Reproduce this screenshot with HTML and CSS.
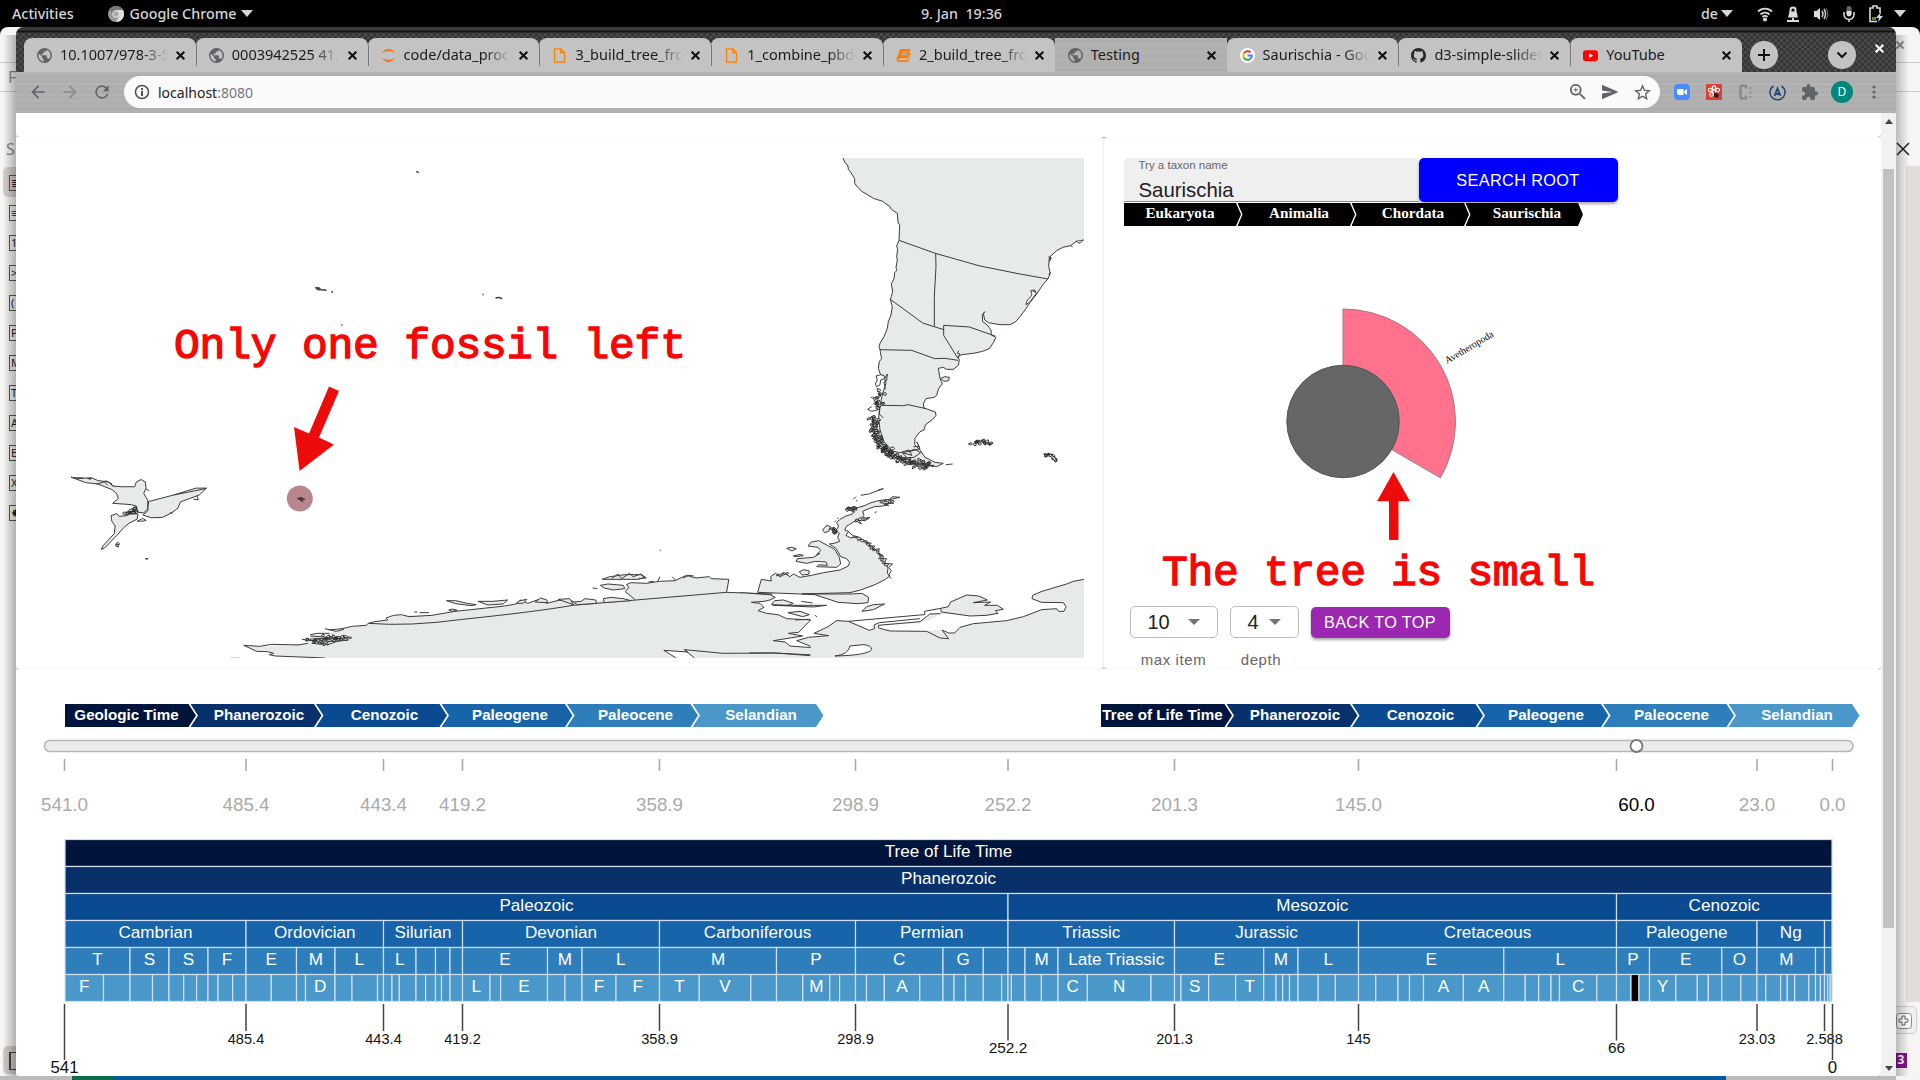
FILE: index.html
```html
<!DOCTYPE html>
<html lang="en">
<head>
<meta charset="utf-8">
<title>Testing</title>
<link rel="stylesheet" href="styles.css">
</head>
<body>
<svg class="defs" width="0" height="0">
  <symbol id="globe" viewBox="2 2 20 20"><path d="M12 2a10 10 0 1 0 0 20 10 10 0 0 0 0-20zM4 12c0-1 .2-1.700.5-2.500L9 14v1c0 1.100.9 2 2 2v3c-4-.5-7-3.900-7-8zm14 5c-.3-.8-1-1.400-1.900-1.400h-1v-3c0-.6-.4-1-1-1H8V9.500h2c.6 0 1-.4 1-1v-2h2c1.100 0 2-.9 2-2v-.1c3 1.200 5 4.100 5 7.600 0 1.900-.8 3.700-2 5z"/></symbol>
  <symbol id="x" viewBox="0 0 10 10"><path d="M1.500 1.500l7 7M8.500 1.500l-7 7" fill="none" stroke="currentColor" stroke-width="1.900"/></symbol>
  <symbol id="file" viewBox="0 0 14 18"><path d="M1 1h7.500L13 5.500V17H1zM8.500 1v4.500H13" fill="none" stroke="#ff8000" stroke-width="1.500"/></symbol>
</svg>

<div class="topbar">
  <div class="top-left"><span class="activities">Activities</span>
    <svg width="16" height="16" viewBox="0 0 16 16"><circle cx="8" cy="8" r="8" fill="#999"/><path d="M8 4h7a8 8 0 0 1-7 12l3.500-6z" fill="#ddd"/><path d="M8 4h7A8 8 0 0 0 2 3l2.500 6z" fill="#777"/><circle cx="8" cy="8" r="3.300" fill="#aaa" stroke="#e8e8e8"/></svg>
    <span>Google Chrome</span><i class="tri"></i></div>
  <div class="clock">9. Jan&nbsp; 19:36</div>
  <div class="status"><span>de</span><i class="tri lang-tri"></i>
    <svg width="16" height="16" viewBox="0 0 16 16" fill="none" stroke="#d6d6d6" stroke-width="1.800"><path d="M1 5.500a10 10 0 0 1 14 0M3.500 8.500a6.500 6.500 0 0 1 9 0M5.500 11a3.500 3.500 0 0 1 5 0"/><circle cx="8" cy="13.500" r="1.200" fill="#ddd"/></svg>
    <svg width="14" height="16" viewBox="0 0 14 16"><path d="M4.500 6V4a2.500 2.500 0 0 1 5 0v2" fill="none" stroke="#ddd" stroke-width="2"/><path d="M3.500 5.500h7L12 11.500H2zM6 12h2v2h5v2H1v-2h5z" fill="#ddd"/></svg>
    <svg width="16" height="16" viewBox="0 0 16 16"><path d="M1 5h2.500L7 2v12L3.500 11H1z" fill="#ddd"/><path d="M9 5q2 3 0 6M11 3q3 5 0 10" fill="none" stroke="#ccc" stroke-width="1.500"/><path d="M13 2q3.500 6 0 12" fill="none" stroke="#555" stroke-width="1.400"/></svg>
    <svg width="14" height="16" viewBox="0 0 14 16"><rect x="4.500" y="0" width="5" height="10" rx="2.500" fill="#666"/><path d="M4.500 5h5v3a2.500 2.500 0 0 1-5 0z" fill="#ddd"/><path d="M2 6v2.500a5 5 0 0 0 10 0V6M7 13v3" fill="none" stroke="#ddd" stroke-width="1.500"/></svg>
    <svg width="14" height="18" viewBox="0 0 14 18"><path d="M8 16.500H1V3h3V1h4v2h3v5" fill="none" stroke="#ddd" stroke-width="1.600"/><path d="M3 12h4v3H3z" fill="#4e9a06"/><path d="M12 7L7 13h3l-1 4 5-6h-3z" fill="#ddd"/></svg>
    <i class="tri"></i></div>
</div>

<div class="desktop">
  <div class="editor">
    <div class="ed-title"></div>
    <div class="ed-menu"><span>F</span></div>
    <div class="ed-side"><span>S</span>
      <ul class="style-list">
        <li class="on"><b>≣</b></li><li><b>≡</b></li><li><b>1</b></li><li><b>&gt;</b></li><li><b>(</b></li><li><b>P</b></li><li><b>M</b></li><li><b>T</b></li><li><b>A</b></li><li><b>B</b></li><li><b>X</b></li><li><b>✸</b></li>
      </ul>
    </div>
    <div class="ed-right"></div>
    <div class="ed-foot-left"></div>
    <svg class="ed-x1" width="10" height="10" color="#8b8b8a"><use href="#x"/></svg>
    <svg class="ed-x2" width="14" height="14" viewBox="0 0 14 14"><path d="M1 1l12 12M13 1L1 13" stroke="#222" stroke-width="1.500"/></svg>
    <div class="ed-tool"><svg width="16" height="16" viewBox="0 0 16 16"><rect x=".5" y=".5" width="15" height="15" rx="3" fill="#fff" stroke="#888"/><path d="M6 3h3v3h3v3H9v3H6V9H3V6h3z" fill="none" stroke="#666"/></svg></div>
    <div class="ed-badge">3</div>
  </div>
  <div class="strip"></div>

  <div class="chrome">
    <div class="tabstrip">
      <div class="tab"><svg class="fav" fill="#5f6368"><use href="#globe"/></svg><span class="fade">10.1007/978-3-540</span><svg class="cl"><use href="#x"/></svg></div>
      <div class="tab"><svg class="fav" fill="#5f6368"><use href="#globe"/></svg><span class="fade">0003942525 41..4</span><svg class="cl"><use href="#x"/></svg></div>
      <div class="tab"><svg class="fav" viewBox="0 0 16 18"><path d="M0 6Q8-4 16 6 8 2 0 6zM0 12q8 10 16 0-8 4-16 0z" fill="#f37726"/></svg><span class="fade">code/data_process</span><svg class="cl"><use href="#x"/></svg></div>
      <div class="tab"><svg class="fav"><use href="#file"/></svg><span class="fade">3_build_tree_from</span><svg class="cl"><use href="#x"/></svg></div>
      <div class="tab"><svg class="fav"><use href="#file"/></svg><span class="fade">1_combine_pbdb</span><svg class="cl"><use href="#x"/></svg></div>
      <div class="tab"><svg class="fav" viewBox="0 0 16 16"><path d="M4.500 1h11L12.500 11H3q-1.500 1 0 2h9.500l2.500-8 .8.500L13 15H2.500Q0 14 .8 11z" fill="#ff7b00"/><path d="M6.500 4.500h6M5.700 7h6" stroke="#c3c3c3"/></svg><span class="fade">2_build_tree_from</span><svg class="cl"><use href="#x"/></svg></div>
      <div class="tab active"><svg class="fav" fill="#5f6368"><use href="#globe"/></svg><span>Testing</span><svg class="cl"><use href="#x"/></svg></div>
      <div class="tab"><svg class="fav" viewBox="0 0 16 16" fill="none" stroke-width="2.200"><circle cx="8" cy="8" r="8" fill="#fff"/><path d="M11.300 4.700A4.600 4.600 0 0 0 4 5.800" stroke="#ea4335"/><path d="M4 5.800a4.600 4.600 0 0 0 0 4.400" stroke="#fbbc05"/><path d="M4 10.200a4.600 4.600 0 0 0 7.200 1.200" stroke="#34a853"/><path d="M11.200 11.400A4.600 4.600 0 0 0 12.600 8H8" stroke="#4285f4"/></svg><span class="fade">Saurischia - Google</span><svg class="cl"><use href="#x"/></svg></div>
      <div class="tab"><svg class="fav" viewBox="0 0 16 16" fill="#24292e"><path d="M8 0C3.580 0 0 3.580 0 8c0 3.540 2.290 6.530 5.470 7.590.4.070.55-.17.55-.38 0-.19-.010-.82-.010-1.490-2.010.37-2.530-.49-2.690-.94-.090-.23-.48-.94-.82-1.130-.28-.15-.68-.52-.010-.53.63-.010 1.080.58 1.230.82.72 1.210 1.870.87 2.330.66.070-.52.28-.87.51-1.070-1.780-.2-3.640-.89-3.640-3.950 0-.87.31-1.590.82-2.150-.080-.2-.36-1.020.080-2.120 0 0 .67-.21 2.200.82.64-.18 1.320-.27 2-.27s1.360.090 2 .27c1.530-1.040 2.200-.82 2.200-.82.44 1.100.16 1.920.080 2.120.51.56.82 1.270.82 2.150 0 3.070-1.870 3.750-3.650 3.950.29.25.54.73.54 1.480 0 1.070-.010 1.930-.010 2.200 0 .21.15.46.55.38A8 8 0 0 0 16 8c0-4.420-3.580-8-8-8z"/></svg><span class="fade">d3-simple-slider</span><svg class="cl"><use href="#x"/></svg></div>
      <div class="tab"><svg class="fav" viewBox="0 0 16 16"><rect y="2.500" width="16" height="11.500" rx="3" fill="#f00"/><path d="M6.500 5.700v5l4.300-2.500z" fill="#fff"/></svg><span>YouTube</span><svg class="cl"><use href="#x"/></svg></div>
      <div class="round"><svg width="14" height="14" viewBox="0 0 14 14"><path d="M7 1v12M1 7h12" stroke="#111" stroke-width="2"/></svg></div>
      <div class="round second"><svg width="12" height="12" viewBox="0 0 12 12"><path d="M1.500 3.500L6 8l4.500-4.500" fill="none" stroke="#111" stroke-width="2"/></svg></div>
      <svg class="win-close" width="11" height="11" color="#fff"><use href="#x"/></svg>
    </div>
    <div class="toolbar">
      <svg class="nav" viewBox="0 0 24 24" fill="#5f6368"><path d="M20 11H7.830l5.590-5.590L12 4l-8 8 8 8 1.410-1.410L7.830 13H20z"/></svg>
      <svg class="nav" viewBox="0 0 24 24" fill="#8b8c8d"><path d="M12 4l-1.410 1.410L16.170 11H4v2h12.170l-5.580 5.590L12 20l8-8z"/></svg>
      <svg class="nav" viewBox="0 0 24 24" fill="#5f6368"><path d="M17.650 6.350A8 8 0 1 0 19.730 14h-2.080A6 6 0 1 1 12 6c1.660 0 3.140.69 4.220 1.780L13 11h7V4z"/></svg>
      <div class="omnibox">
        <svg width="16" height="16" viewBox="0 0 16 16"><circle cx="8" cy="8" r="6.500" fill="none" stroke="#4c5055" stroke-width="1.500"/><path d="M7 7h2v5H7zM7 4h2v2H7z" fill="#4c5055"/></svg>
        <span class="url">localhost<em>:8080</em></span>
        <svg width="16" height="16" viewBox="3 3 18 18" fill="#5f6368"><path d="M15.500 14h-.79l-.28-.27A6.500 6.500 0 1 0 13.730 14.430l.27.28v.79l5 5 1.490-1.490zm-6 0a4.500 4.500 0 1 1 0-9 4.500 4.500 0 0 1 0 9zM10 7H9v2H7v1h2v2h1v-2h2V9h-2z"/></svg>
        <svg width="16" height="16" viewBox="2 2 20 20" fill="#5f6368"><path d="M2 21l21-9L2 3v7l13 2-13 2z"/></svg>
        <svg width="17" height="17" viewBox="2 2 20 20" fill="#5f6368"><path d="M22 9.240l-7.190-.62L12 2 9.190 8.630 2 9.240l5.460 4.730L5.820 21 12 17.270 18.180 21l-1.630-7.030zM12 15.400l-3.760 2.270 1-4.280-3.320-2.880 4.380-.38L12 6.100l1.710 4.040 4.380.38-3.320 2.880 1 4.280z"/></svg>
      </div>
      <div class="exts">
        <svg width="16" height="16" viewBox="0 0 16 16"><rect width="16" height="16" rx="4" fill="#4a8cff"/><path d="M3 5h6.500v6H4.500L3 9.500zM10.300 7L13 5v6l-2.700-2z" fill="#fff"/></svg>
        <svg width="16" height="16" viewBox="0 0 16 16"><rect width="16" height="16" fill="#dc4136"/><g fill="none" stroke="#fff" stroke-width="1.100"><circle cx="8" cy="7.500" r="1.600"/><circle cx="8" cy="3.700" r="1.800"/><circle cx="4.300" cy="6" r="1.800"/><circle cx="11.700" cy="6" r="1.800"/><circle cx="5.500" cy="10.500" r="1.800"/></g><path d="M8 8l5 2.500-1 3.500-4-1z" fill="#222"/></svg>
        <svg width="16" height="16" viewBox="0 0 16 16"><path d="M8 4.500V3Q8 1.500 6 1.500H4.500Q2.500 1.500 2.500 3.500v9Q2.500 14.500 4.500 14.500H6Q8 14.500 8 13V11.500" fill="none" stroke="#8a8a8a" stroke-width="2.500"/><path d="M12.500 3v11" stroke="#999" stroke-width="2.500" stroke-dasharray="2.500 2"/></svg>
        <svg width="17" height="17" viewBox="0 0 17 17"><path d="M4.500 2a7.500 7.500 0 1 0 8 0" fill="none" stroke="#2c456f" stroke-width="1.500"/><path d="M5.500 12L8.500 4.500 11.500 12M6.500 10h4" fill="none" stroke="#2c456f" stroke-width="1.800"/></svg>
        <svg width="16" height="16" viewBox="2 1 21 21" fill="#5f6368"><path d="M20.500 11H19V7a2 2 0 0 0-2-2h-4V3.500a2.500 2.500 0 0 0-5 0V5H4a2 2 0 0 0-2 2v3.800h1.500a2.700 2.700 0 0 1 0 5.400H2V20a2 2 0 0 0 2 2h3.800v-1.500a2.700 2.700 0 0 1 5.400 0V22H17a2 2 0 0 0 2-2v-4h1.500a2.500 2.500 0 0 0 0-5z"/></svg>
        <div class="avatar">D</div>
        <svg width="16" height="16" viewBox="0 0 16 16" fill="#5f6368"><circle cx="8" cy="3" r="1.600"/><circle cx="8" cy="8" r="1.600"/><circle cx="8" cy="13" r="1.600"/></svg>
      </div>
    </div>

    <div class="viewport">
      <main class="page">
        <section class="paper head"></section>
        <div class="row">
          <section class="paper map-card">
            <svg class="map" viewBox="36 158 1048 500">
              <!-- South America -->
              <g transform="translate(780 130) scale(.33333)">
                <path d="M187 80L194 96 204 108 205 118 213 128 224 146 224 160 230 168 245 184 262 194 280 205 308 214 318 222 328 228 334 238 352 250 354 276 359 286 357 331 350 348 353 358 350 380 352 390 348 412 350 422 344 428 342 446 334 462 338 485 334 500 331 508 337 530 333 555 325 575 322 595 312 620 300 640 297 650 300 659 302 672 305 685 298 695 295 715 302 735 312 736 318 760 308 790 300 826 296 862 300 900 312 935 330 955 350 985 400 995 440 1004 470 1010 490 1000 465 997 435 982 420 960 404 944 405 925 420 905 432 900 436 885 458 868 468 856 466 846 432 834 430 822 438 806 462 802 470 796 476 775 487 762 480 745 475 715 490 712 500 718 520 718 535 706 538 690 534 680 545 674 580 670 608 664 628 656 640 638 648 622 634 615 633 600 622 585 608 575 607 555 615 545 610 550 614 570 625 578 660 584 690 584 706 576 720 560 735 540 750 518 770 492 790 462 804 447 811 430 806 410 808 382 830 362 848 352 872 347 888 334 912 330 925 328 925 76 187 76z"/>
                <path d="M357 331L466 370 600 408 720 432 804 447M467 370L468 410 463 500 463 589M331 508L428 579 491 599M491 586L568 591 645 618M491 586V616L533 684M300 659L395 661 464 686 495 685 534 691M300 826L370 827 384 824 438 836M534 684l6-12-8-2 4-8" fill="none"/>
                <path d="M738 524l2-10 12-14 4-8-4-10 12-2 5 10-12 16-10 12z" fill="#fff"/>
                <path d="M757 482l10 6M806 380l8 4-6 10 4-12M812 426l-6 8M872 347l6 4M888 334l12 6 8-8M482 745l12-5 14 2-2 10-14 2z"/>
                <g fill="none"><path d="M300 735l-12 3 4 12-6 12 4 8 10-6 2-14 12-4 8-14-2 20-8 4 4 22M272 803l6-2M275 830l-12 8 12 6 24-6M300 830l-2 22 12 12"/>
                <path class="rough" data-spread="16" d="M274 860L278 910 290 940 314 968 345 986 380 1000 445 1016"/>
                <path class="rough" data-spread="16" d="M288 862L288 900 302 935 328 962 352 982 400 996 460 1006"/>
                <path class="rough" data-spread="16" d="M280 870L282 910 302 945 330 970 380 996"/>
                <path class="rough" data-spread="20" d="M304 785L290 800 305 820 284 830"/>
                <path d="M330 962l30 6 26-8 10 16-30-8 14 14-28 2-8-12M370 968l34-10 18 10-20 14-24 2M400 950l18 0-8-14 10 20-36 10M350 985l40 14 70 8M498 1004l20-2"/></g>
                <path class="rough" data-spread="14" d="M574 938L600 936 636 936" fill="none"/>
                <path class="rough" data-spread="4" d="M794 974L814 976 828 992" fill="none"/>
                <path d="M792 973l20 1 12 8 7 12-7-2-8-10-12-6z"/>
              </g>
              <!-- Antarctic Peninsula and the eastern coast -->
              <g transform="translate(740 440) scale(.33333)">
                <path d="M53 457L64 418 94 423 92 410 106 400 118 408 130 398 150 410 160 402 180 412 215 406 250 398 300 390 325 378 329 368 320 356 302 350 288 325 268 312 282 310 299 304 293 292 298 280 288 272 296 258 290 248 300 238 318 228 338 222 342 208 350 204 376 196 388 190 414 182 448 178 458 170 480 172 450 178 460 190 436 190 430 198 404 200 386 206 368 214 372 226 362 238 340 246 328 254 320 258 314 270 326 274 318 286 332 294 352 290 366 300 382 305 388 316 400 322 415 338 430 348 428 362 440 372 444 384 442 400 450 408 436 418 405 434 362 450 330 458 180 462z"/>
                <path d="M204 318L214 306 236 302 262 316 284 328 298 352 302 372 290 382 230 380 236 374 262 376 258 366 226 364 200 370 168 364 172 356 220 352 240 340 230 344 242 332 234 322zM140 325l14-3 15 4-13 7zM160 348l22-5 8 4-20 3zM248 270l12-14 12 4-6 14-12 4zM178 395l14-6 16 4-2 10-20 2zM186 462h150l30-2 20 12-2 16-30 3-60-4-30-10-40-13z"/>
                <g fill="none"><path d="M340 178l8-8M352 184l-4-3M362 166l24-4 44-16-16 4M284 246l4-4M292 236l4-2M266 268l16-6 10 10-16 4 14 6M404 218l6-3M320 206l24 10-20-14 22 2M344 240l20 12-8-12 20 2 14-10-18 4M422 186l24 10-14 0 20-8M326 276l14 12M346 288l18 8-12 6M378 306l16 4-10 8 20 0-8 12 22-4-4 16 14 4-12 10 24 0-8 14 26 2-12 10 8 10-8 14 8 10"/>
                <path class="rough" data-spread="8" d="M274 266L292 278"/><path class="rough" data-spread="6" d="M320 208L350 206"/>
                <path class="rough" data-spread="5" data-step="12" d="M345 290L390 318 418 340 432 370 446 380"/>
                <path class="rough" data-spread="4" data-step="11" d="M350 240L388 236M420 186L460 184M102 408L150 400"/></g>
                <path d="M-536 660L-536 610-180 490 0 458 90 464 106 472 90 480 72 484 34 487 60 490 72 502 54 512 80 520 114 524 140 536 206 546 176 577 145 580 188 588 100 602 135 606 150 618 200 622 330 618 395 616 395 660z" stroke="none"/>
                <path d="M0 458L90 464 106 472 90 480 72 484 34 487 60 490 72 502 54 512 80 520 114 524 140 536 212 540 206 546 176 577 145 580 188 588 100 602 135 606 150 618 200 622 280 622 340 616 380 614 396 626 388 640 350 647 290 650 220 645 100 639 0 639" fill="none"/>
                <path d="M212 619L170 602 206 592 266 587 222 580 264 560 290 542 310 542 360 556 392 572 404 566 402 555 424 553 540 545 580 520 602 521 604 504 625 500 632 486 680 465 716 468 742 480 700 488 752 486 734 496 772 496 790 508 766 512 774 520 740 528 604 521 568 540 540 550 415 556 416 564 450 573 560 574 590 570 610 572 626 579 644 579 660 562 700 551 800 542 850 530 905 509 950 506 956 514 972 514 978 500 970 488 904 487 876 476 878 466 906 454 980 432 1000 424 1032 418V654H212z" stroke="none"/>
                <path d="M212 619L170 602 206 592 266 587 222 580 264 560 290 542 325 544 540 525 554 524 554 514 602 505 625 500 632 486 680 465 716 468 742 480 700 488 752 486 734 496 772 496 790 508 766 512 774 520 740 526 690 528 604 516 602 504M602 521L570 522 540 545 415 556 416 564 450 573 560 574 600 594 626 596 606 570 626 579 644 579 660 562 700 551 800 542 850 530 905 509 950 506 956 514 972 514 978 500 970 488 904 487 876 476 878 466 906 454 980 432 1000 424 1032 418M325 544L388 571 404 566 402 555 418 548 540 536" fill="none"/>
                <path d="M366 514l14-14 20-6 34-2-34 17zM94 494l10-12 26-2 30 10-16 6zM144 518l36-4 28 10-20 6zM165 540l45-2M100 496l160 0-40 5zM184 484l34 5M225 526l6 4"/>
                <path d="M330 618l40-4q24 2 25 14-10 18-110 20 40-4 45-30z" fill="#fff"/>
              </g>
              <!-- West Antarctic coast -->
              <g transform="translate(210 550) scale(.38265 .33333)">
                <path stroke="none" d="M88 286L130 289 205 284 256 280 262 258 310 250 345 236 408 226 430 217 465 210 480 196 580 196 690 178 770 168 800 162 812 150 830 160 860 148 880 160 915 150 950 154 1110 148 1085 125 1088 104 1100 98 1140 100 1215 92 1245 76 1270 84 1304 80 1310 86 1356 88 1350 127 1410 130 1410 324H300L170 318 155 314 166 310 150 305 122 304z"/>
                <path fill="none" d="M300 324L170 318 155 314 166 310 150 305 122 304 88 286 130 289 160 283 205 284 230 285 256 280M310 240L345 236 372 229 408 226 414 220 430 215 465 210 460 204 480 196 500 194 520 200 580 196 640 184 690 178 770 168 800 162 812 150 830 160 860 148 880 160 915 150 950 154M1110 148L1085 125 1095 112 1088 104 1100 98 1140 100 1175 94 1215 92 1245 76 1270 84 1304 80 1310 86 1356 88 1350 127 1470 132M414 220Q520 230 660 208 860 184 948 166L1350 127M948 166l-10-14"/>
                <path d="M1186 301l56 6 24 17h-48z" fill="#fff" stroke="none"/>
                <path d="M1218 324L1186 301 1248 306 1240 299 1266 324M1240 299L1340 310 1480 309 1568 317" fill="none"/>
                <path d="M618 152l24 0 30 8 24 4-14 3-40-6zM700 154l40 0 38-4-12 12-40 3zM624 180l10-3 12 4-14 3zM1025 88l20-8 40-6 40 0 12 8-18 6zM1020 106l20-4 40 4 4 10-30 4-24-6zM800 160l10-8 18-4-10 12zM850 156l14-12 16 6 2 8zM910 148l30-2 10 18zM950 156l20-2 10-8 28 4 2 10-50 4zM1028 146l20-4 32 4 20 6-70 6z"/>
                <path d="M534 186l8 0M548 188l24 0M1000 114l12 2M1050 86l16-14 10 14 20-16 10 10 20-8 14 12-20 2M1146 96l14-2M1170 94l6-14M1208 80l8 10M1236 84l16-8 12 2" fill="none"/>
                <path d="M240 268l40 6-14 6 42 4 24-10 30-4-12-10-30 2 18 10-40 4-26-10 50 0M262 258l46 4-30 10 50-4 30-8M262 254l20-4 30 0M300 236l30 8 20-6" fill="none"/>
                <path class="rough" data-spread="8" data-step="8" fill="none" d="M250 270L362 266M290 260L355 262M270 278L315 282"/>
                <path d="M54 323h22" stroke="#ccc"/>
                <circle cx="1177" cy="1" r="2"/>
              </g>
              <!-- New Zealand -->
              <g transform="translate(0 130) scale(.408163 .34436)">
                <path d="M174 1008L190 1012 224 1010 240 1018 266 1022 276 1034 300 1036 330 1036 334 1022 346 1015 356 1022 358 1040 352 1055 362 1075 362 1100 352 1112 338 1110 334 1092 322 1088 276 1084 290 1070 286 1056 274 1044 240 1028 210 1024z"/>
                <path d="M364 1079L425 1060 480 1040 506 1040 488 1060 442 1080 436 1098 420 1112 398 1125 370 1126 350 1118 362 1106zM425 1060l35-8 45-11M272 1120l14-6 6 8 18-2 14-8 14 4-2 14-20 12-14 14-16 22-30 36-8 4 4-10 28-36 2-22-8-14z"/>
                <path d="M180 1010l24 0M214 1012l10 0-6 3M236 1028l20-6 8 10M258 1018l16 10-4-2 10 10M336 1136l14-8 8 6-10 2-6 0zM358 1042l8 6M474 1072l12 2-4-12M416 1112l8 0" fill="none"/>
                <path class="rough" data-spread="6" d="M308 1112L334 1108M322 1106L334 1098M282 1205L290 1203" fill="none"/>
                <path stroke-width="1.500" d="M356 1245h7M774 458l8 1 4 5-8-1zM788 464l12 1M812 471l4-2M1182 478h3M1214 488l8-2 8 4M1020 120l6 4M836 566h3" fill="none"/>
              </g>
              <circle cx="299.800" cy="498.500" r="13" fill="#b8868f" stroke="none"/>
              <path d="M297 498.500l4-1 4 2-4 0 2 2-2-.5" fill="#5a2d36"/>
            </svg>
          </section>
          <section class="paper tree-card">
            <div class="search"><label class="field"><small>Try a taxon name</small><span>Saurischia</span></label><button class="btn blue">SEARCH ROOT</button></div>
            <nav class="trail serif"><span>Eukaryota</span><span>Animalia</span><span>Chordata</span><span>Saurischia</span></nav>
            <svg class="sun" width="500" height="380" viewBox="1124 226 500 380">
              <path d="M1343 309A112.500 112.500 0 0 1 1440.400 477.800L1391.700 449.600A56.200 56.200 0 0 0 1343 365.300z" fill="#ff728d" stroke="#a07a80"/>
              <circle cx="1343" cy="421.500" r="56.200" fill="#666" stroke="#555"/>
              <text transform="translate(1447 364) rotate(-30.500)" font-family="Liberation Serif, serif" font-size="10" textLength="55">Avetheropoda</text>
            </svg>
            <div class="controls">
              <div class="ctl"><div class="select s1">10<i></i></div><span>max item</span></div>
              <div class="ctl"><div class="select s2">4<i></i></div><span class="depth">depth</span></div>
              <button class="btn purple">BACK TO TOP</button>
            </div>
          </section>
        </div>
        <section class="paper time-card">
          <div class="trails">
            <nav class="trail"><span>Geologic Time</span><span>Phanerozoic</span><span>Cenozoic</span><span>Paleogene</span><span>Paleocene</span><span>Selandian</span></nav>
            <nav class="trail"><span>Tree of Life Time</span><span>Phanerozoic</span><span>Cenozoic</span><span>Paleogene</span><span>Paleocene</span><span>Selandian</span></nav>
          </div>
          <svg id="timeline" class="timeline" width="1864" height="349" viewBox="16 727 1864 349"></svg>
        </section>
      </main>
      <div class="scroll"><i class="up"></i><div class="thumb"></div><i class="down"></i></div>
    </div>
  </div>
  <svg class="notes" viewBox="0 0 1920 1080">
    <path d="M329 386.500L339 391 319 437.500 334 444.400 299.600 471 294 427 309 433.400zM1393.500 472L1410 501.300H1398.500V540H1389V501.300H1377z" fill="#ec0c0c"/>
    <text x="174" y="357.500" textLength="512">Only one fossil left</text>
    <text x="1162" y="584.500" textLength="433">The tree is small</text>
  </svg>
</div>
<script src="timeline.js"></script>
</body>
</html>
```
FILE: styles.css
```css
* { box-sizing: border-box; }
body { margin: 0; width: 1920px; height: 1080px; overflow: hidden; background: #000; font-family: "Liberation Sans", sans-serif; }
.defs { position: absolute; }
svg { flex: none; }
.topbar { height: 27px; display: grid; grid-template-columns: 1fr auto 1fr; align-items: center; padding: 0 14px 0 12px; color: #d6d6d6; font: 500 14.300px/27px "Noto Sans", sans-serif; }
.top-left, .status { display: flex; align-items: center; }
.activities { margin-right: 34px; }
.top-left svg { margin-right: 6px; }
.clock { padding-left: 5px; }
.status { justify-content: flex-end; gap: 13px; }
.tri { border: 6px solid transparent; border-top: 7px solid #d6d6d6; border-bottom: 0; margin-left: 5px; }
.status .tri { margin-left: -2px; }
.status .lang-tri { margin: 0 11px 0 -10px; }
.desktop { position: relative; height: 1053px; }

.editor { position: absolute; inset: 0; background: #f6f5f4; border-radius: 8px 8px 0 0; overflow: hidden; font-family: "Noto Sans", sans-serif; }
.ed-title { height: 36px; border-bottom: 1px solid #ccc; }
.ed-menu { height: 29px; border-bottom: 1px solid #ccc; padding: 3px 0 0 8px; color: #8b8b8b; font-size: 16px; }
.ed-side { padding: 46px 0 0 3px; color: #888; font-size: 16px; line-height: 22px; }
.ed-side > span { margin-left: 3px; }
.style-list { list-style: none; margin: 7px 0 0; padding: 0; }
.style-list li { width: 30px; height: 30px; padding: 7.500px 0 0 6px; border-radius: 5px; }
.style-list .on { background: #d5d0cc; }
.style-list b { display: block; width: 16px; height: 16px; border: 1px solid #555; padding-left: 1px; font: 11px/14px "Noto Sans", sans-serif; color: #222; }
.ed-right { position: absolute; right: 0; top: 139px; width: 14px; height: 836px; background: #e1deda; }
.ed-foot-left { position: absolute; left: 3px; top: 1019px; width: 30px; height: 28px; border-radius: 5px; background: #d0cbc7; }
.ed-foot-left::after { content: ""; position: absolute; left: 6px; top: 6px; width: 16px; height: 16px; border: 1px solid #444; border-left-width: 2px; }
.ed-x1 { position: absolute; right: 15px; top: 13px; }
.ed-x2 { position: absolute; right: 10px; top: 115px; }
.ed-tool { position: absolute; right: 3px; top: 979px; width: 40px; height: 28px; border: 1px solid #ccc; border-radius: 5px; padding: 5px 4px 0 18px; background: #f1f0ee; }
.ed-badge { position: absolute; right: 13px; top: 1026px; width: 12px; height: 15px; background: #80138a; color: #fff; font: bold 12px/13px "Noto Sans", sans-serif; text-align: center; }
.strip { position: absolute; left: 0; top: 1049px; width: 1920px; height: 4px; background: linear-gradient(90deg, #bbb 72px, #0d6b47 72px 114px, #055a9c 114px 1726px, #bbb 1726px 1896px, #f4f3f1 1896px); }

.chrome { position: absolute; left: 16px; top: 0; width: 1880px; height: 1049px; border-radius: 8px 8px 0 0; overflow: hidden; display: flex; flex-direction: column; background: #fff; }
.desktop::before, .desktop::after { content: ""; position: absolute; z-index: 1; top: 8px; bottom: 4px; width: 13px; pointer-events: none; }
.desktop::before { left: 3px; background: linear-gradient(90deg, transparent, rgba(0,0,0,.28)); }
.desktop::after { left: 1896px; background: linear-gradient(270deg, transparent, rgba(0,0,0,.24)); }
.tabstrip { height: 45px; display: flex; align-items: center; padding: 11px 11px 0 8px; background: linear-gradient(#3a3a3a 0 3px, #151515 4px 5px, transparent 6px), repeating-conic-gradient(#353535 0 25%, #494949 0 50%) 0 0 / 6px 6px; }
.tab { width: 171.800px; height: 34px; flex: none; display: flex; align-items: center; padding: 0 10px 0 13px; border-radius: 8px 8px 0 0; background: #c3c3c3; font: 14.500px "Noto Sans", sans-serif; color: #1c1c1c; position: relative; }
.tab + .tab:not(.active)::before { content: ""; position: absolute; left: 0; top: 7px; height: 21px; width: 1px; background: #777; }
.tab.active + .tab::before { display: none; }
.tab.active { background: repeating-linear-gradient(#b2b2b2 0 2px, #adadad 3px 4px, #b1b1b1 5px 7px); border-radius: 0; }
.fav { width: 15px; height: 15px; margin-right: 8px; }
.tab span { flex: 1; height: 22px; line-height: 20px; overflow: hidden; white-space: nowrap; margin-right: 7px; }
.fade { -webkit-mask-image: linear-gradient(90deg, #000 75%, transparent); mask-image: linear-gradient(90deg, #000 75%, transparent); }
.cl { width: 11px; height: 11px; color: #111; }
.round { width: 28px; height: 28px; border-radius: 50%; background: #c3c3c3; margin-left: 8px; display: grid; place-items: center; flex: none; }
.round.second { margin-left: 50px; }
.win-close { margin: -13px 0 0 18px; }
.toolbar { height: 41px; display: flex; align-items: center; padding: 0 14px 1px 12px; background: repeating-linear-gradient(#b4b4b4 0 2px, #adadad 3px 4px, #b1b1b1 5px 8px, #aeaeae 9px 11px); }
.nav { width: 20px; height: 20px; margin-right: 12px; }
.omnibox { width: 1536px; height: 32px; border-radius: 16px; background: #fafafa; display: flex; align-items: center; padding: 0 9px 0 10px; gap: 16px; }
.url { flex: 1; margin-left: -8px; font: 14px "Noto Sans", sans-serif; color: #222; }
.url em { font-style: normal; color: #777; }
.exts { display: flex; align-items: center; gap: 15.800px; margin-left: 14px; }
.avatar { width: 22px; height: 22px; margin: 0 -3px; border-radius: 50%; background: #00897b; color: #fff; font: 12px/22px "Noto Sans", sans-serif; text-align: center; }

.viewport { flex: 1; display: flex; min-height: 0; }
.page { width: 1865px; display: flex; flex-direction: column; min-height: 0; background: #fff; overflow: hidden; }
.paper { background: #fff; border-radius: 4px; box-shadow: 0 2px 1px -1px rgba(0,0,0,.2), 0 1px 1px rgba(0,0,0,.14), 0 1px 3px rgba(0,0,0,.12); }
.head { height: 24px; flex: none; }
.row { display: flex; height: 532px; flex: none; }
.map-card { width: 1087.500px; padding: 21px 20px; }
.map { display: block; width: 1048px; height: 500px; stroke: #3c3c3c; stroke-width: 1; fill: #e7eaea; }
.map path { vector-effect: non-scaling-stroke; stroke-linejoin: round; }
.map .rough { stroke: none; }
.map .islets { stroke-width: .9; stroke: #262626; }
.tree-card { flex: 1; padding: 21px 20px 0; overflow: hidden; }
.search { display: flex; height: 44px; margin-bottom: 1px; }
.field { width: 295px; height: 44px; background: #efefef; border-bottom: 1px solid #8c8c8c; border-radius: 4px 4px 0 0; padding: 1px 15px; overflow: hidden; color: #222; }
.field small { display: block; font-size: 11.500px; line-height: 13px; color: #666; }
.field span { display: block; font-size: 20.400px; line-height: 24px; margin-top: 6px; }
.btn { border: 0; border-radius: 5px; color: #fff; font: 16.300px "Liberation Sans", sans-serif; letter-spacing: .35px; padding: 1px 0 0; box-shadow: 0 2px 3px rgba(0,0,0,.35); }
.blue { width: 199px; background: #00f; }
.purple { width: 139px; height: 31px; margin: 1px 0 0; padding: 0; background: #9c27b0; }
.trail { display: flex; color: #fff; font-weight: bold; font-size: 15.200px; }
.trail span { width: 132px; height: 23px; line-height: 22px; margin-right: -6.500px; text-align: center; clip-path: polygon(0 0, 123.500px 0, 131px 50%, 123.500px 100%, 0 100%, 7.500px 50%); padding-left: 5px; }
.trail span:first-child { padding: 0 9px 0 0; clip-path: polygon(0 0, 123.500px 0, 131px 50%, 123.500px 100%, 0 100%); background: #00143c; white-space: nowrap; }
.trail span:nth-child(2) { background: #08306b; }
.trail span:nth-child(3) { background: #0a4a90; }
.trail span:nth-child(4) { background: #1764ab; }
.trail span:nth-child(5) { background: #2f7ebc; }
.trail span:nth-child(6) { background: #4a98c9; }
.serif { font-family: "Liberation Serif", serif; }
.trail.serif span, .trail.serif span:first-child { background: #000; width: 119px; line-height: 20px; margin-right: -5px; padding: 0 4px 0 8px; clip-path: polygon(0 0, 112.500px 0, 117.500px 50%, 112.500px 100%, 0 100%, 5px 50%); }
.trail.serif span:first-child { padding: 0 6px 0 0; clip-path: polygon(0 0, 112.500px 0, 117.500px 50%, 112.500px 100%, 0 100%); }
.sun { display: block; height: 380px; }
.controls { display: flex; gap: 12px; padding-left: 6px; }
.ctl { display: flex; flex-direction: column; align-items: center; color: #666; font-size: 15px; letter-spacing: .6px; }
.ctl span { margin-top: 13px; line-height: 18px; }
.ctl .depth { margin-right: 6px; }
.select { height: 32px; border: 1px solid #bdbdbd; border-radius: 5px; display: flex; align-items: center; padding-left: 17px; color: #222; font-size: 20px; letter-spacing: 0; }
.s1 { width: 88px; } .s2 { width: 69px; }
.select i { border: 6px solid transparent; border-top: 6px solid #757575; border-bottom: 0; margin-left: auto; margin-right: 17px; }
.time-card { flex: 1; padding-top: 35px; min-height: 0; overflow: hidden; }
.trails { display: flex; justify-content: space-between; padding: 0 27px 0 49px; width: 1865px; }
.timeline { display: block; }
.scroll { width: 15px; background: #f1f1f1; position: relative; display: flex; flex-direction: column; align-items: center; }
.thumb { width: 11px; height: 759px; margin: 45px 0 auto; background: #c1c1c1; }
.up { border: 4px solid transparent; border-bottom: 5px solid #444; border-top: 0; margin-top: 6px; }
.down { border: 4px solid transparent; border-top: 5px solid #444; border-bottom: 0; margin-bottom: 5px; }
.notes { position: absolute; left: 0; top: -27px; width: 1920px; height: 1080px; z-index: 2; pointer-events: none; font: 43px "Liberation Mono", monospace; fill: #f80505; }
.notes text { stroke: #f80505; stroke-width: 1.400px; }
```
FILE: timeline.js
```js
// Geologic time chart: slider, partition rows and age axis.
const NS = 'http://www.w3.org/2000/svg';
const svg = document.getElementById('timeline');
function add(tag, attrs, text) {
  const el = document.createElementNS(NS, tag);
  for (const k in attrs) el.setAttribute(k, attrs[k]);
  if (text) el.textContent = text;
  svg.appendChild(el);
}
function label(x, y, text, size, fill) {
  add('text', { x, y, 'text-anchor': 'middle', 'font-size': size, fill }, text);
}

// Slider
add('rect', { x: 44.5, y: 740.5, width: 1808.5, height: 11, rx: 5.5, fill: '#ececec', stroke: '#b8b8b8', 'stroke-width': 1.6 });
const stops = [[64.5, '541.0'], [246, '485.4'], [383.5, '443.4'], [462.5, '419.2'], [659.5, '358.9'], [855.5, '298.9'],
  [1008, '252.2'], [1174.5, '201.3'], [1358.5, '145.0'], [1616.5, ''], [1757, '23.0'], [1832.5, '0.0']];
for (const [x, t] of stops) {
  add('path', { d: `M${x} 759v12`, stroke: '#aaa', 'stroke-width': 1.6 });
  label(x, 811, t, 18.8, '#aaa');
}
add('circle', { cx: 1636.5, cy: 746, r: 6, fill: '#fff', stroke: '#777', 'stroke-width': 1.8 });
label(1636.5, 811, '60.0', 18.8, '#000');

// Partition rows: [left edge, name]
const end = 1832;
const rows = [
  ['#00143c', [[65, 'Tree of Life Time']]],
  ['#08306b', [[65, 'Phanerozoic']]],
  ['#0a4a90', [[65, 'Paleozoic'], [1008, 'Mesozoic'], [1616.5, 'Cenozoic']]],
  ['#1764ab', [[65, 'Cambrian'], [246, 'Ordovician'], [383.5, 'Silurian'], [462.5, 'Devonian'], [659.5, 'Carboniferous'], [855.5, 'Permian'],
    [1008, 'Triassic'], [1174.5, 'Jurassic'], [1358.5, 'Cretaceous'], [1616.5, 'Paleogene'], [1757, 'Ng'], [1824.5, '']]],
  ['#2f7ebc', [[65, 'T'], [130, 'S'], [169, 'S'], [208, 'F'], [246, 'E'], [296.5, 'M'], [335, 'L'], [383.5, 'L'], [416], [435.5], [450],
    [462.5, 'E'], [547.5, 'M'], [582, 'L'], [659.5, 'M'], [776.5, 'P'], [855.5, 'C'], [943, 'G'], [983.3], [1008], [1025, 'M'],
    [1058, 'Late Triassic'], [1174.5, 'E'], [1263.7, 'M'], [1298, 'L'], [1358.5, 'E'], [1503.8, 'L'], [1616.5, 'P'], [1649.5, 'E'],
    [1721.8, 'O'], [1757, 'M'], [1815.5], [1824.5]]],
  ['#4a98c9', [[65, 'F'], [103.5], [130], [152.5], [169], [183.7], [196.6], [208], [218], [232.7], [246], [271.3], [296.5], [305.5, 'D'],
    [335], [352], [377.5], [383.5], [392], [399.3], [416], [425.6], [435.5], [441.5], [450], [462.5, 'L'], [490], [500.6, 'E'], [547.5],
    [565], [582, 'F'], [616, 'F'], [659.5, 'T'], [699.3, 'V'], [750.8], [776.5], [802.8, 'M'], [829.8], [839.6], [855.5], [866.5],
    [884.3, 'A'], [919.8], [943], [954], [965.5], [983.3], [1001.6], [1008], [1011.4], [1025], [1041.4], [1058, 'C'], [1087.4, 'N'],
    [1151], [1174.5], [1181, 'S'], [1208.6], [1235.6, 'T'], [1263.7], [1276], [1282.7], [1289.5], [1298], [1318.2], [1335.4], [1358.5],
    [1375.8], [1398], [1409.5], [1423.5, 'A'], [1463.4, 'A'], [1503.8], [1525.2], [1538.7], [1551], [1559.5, 'C'], [1596.8], [1616.5],
    [1631], [1639], [1649.5, 'Y'], [1675.8], [1697.3], [1708.3], [1721.8], [1740.8], [1757], [1765.8], [1780.6], [1787.3], [1794.7],
    [1808.8], [1815.5], [1820.4], [1824.5], [1827.7], [1830.2]]],
];
rows.forEach(([fill, cells], r) => {
  const y = 839.5 + r * 27;
  cells.forEach(([x, name], i) => {
    const right = i + 1 < cells.length ? cells[i + 1][0] : end;
    const selected = r === 5 && x === 1631;
    add('rect', { x, y, width: right - x, height: 27, fill: selected ? '#000' : fill, stroke: '#d3dfec', 'stroke-width': 1.2 });
    if (name) label((x + right) / 2, y + 17.5, name, 17.1, '#fff');
  });
});

// Age axis: [x, tick end, label, baseline, size]
const axis = [[64.5, 1060, '541', 1073, 16.8], [246, 1031, '485.4', 1044, 14.6], [383.5, 1031, '443.4', 1044, 14.6], [462.5, 1031, '419.2', 1044, 14.6],
  [659.5, 1031, '358.9', 1044, 14.6], [855.5, 1031, '298.9', 1044, 14.6], [1008, 1040.5, '252.2', 1053, 15.4], [1174.5, 1031, '201.3', 1044, 14.6],
  [1358.5, 1031, '145', 1044, 14.6], [1616.5, 1040.5, '66', 1053, 15.4], [1757, 1031, '23.03', 1044, 14.6], [1824.5, 1031, '2.588', 1044, 14.6],
  [1832.5, 1060, '0', 1073, 16.8]];
for (const [x, y, t, base, size] of axis) {
  add('path', { d: `M${x} 1004V${y}`, stroke: '#444', 'stroke-width': 1.5 });
  label(x, base, t, size, '#111');
}

// Archipelagos: small irregular islets scattered along each guide line.
let seed = 7;
const rnd = () => (seed = (seed * 16807) % 2147483647) / 2147483647;
document.querySelectorAll('.map .rough').forEach(guide => {
  const spread = +guide.dataset.spread;
  const step = +guide.dataset.step || 4;
  let d = '';
  for (let s = 0; s < guide.getTotalLength(); s += step) {
    const p = guide.getPointAtLength(s);
    const cx = p.x + (rnd() - .5) * spread;
    const cy = p.y + (rnd() - .5) * spread;
    for (let k = 0; k < 6; k++) {
      const a = k * Math.PI / 3, q = 2 + rnd() * 5;
      d += (k ? 'L' : 'M') + (cx + q * Math.cos(a)).toFixed(1) + ' ' + (cy + q * Math.sin(a) * .8).toFixed(1);
    }
    d += 'z';
  }
  const islets = document.createElementNS(NS, 'path');
  islets.setAttribute('d', d);
  islets.setAttribute('class', 'islets');
  islets.setAttribute('fill', '#e7eaea');
  guide.after(islets);
});
```
